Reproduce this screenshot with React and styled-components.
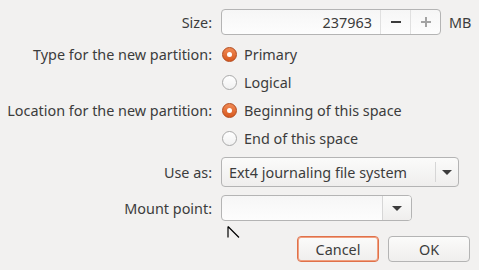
import React from "react";
import styled, { createGlobalStyle } from "styled-components";

const Global = createGlobalStyle`
  html, body {
    margin: 0;
    padding: 0;
    background: #f2f1f0;
  }
  body {
    font-family: "Noto Sans", "DejaVu Sans", sans-serif;
    font-size: 14.4px;
    color: #3c3c3c;
  }
`;

const Dialog = styled.div`
  width: 479px;
  height: 270px;
  padding-top: 9px;
  box-sizing: border-box;
  position: relative;
  overflow: hidden;
`;

const Row = styled.div`
  display: flex;
  align-items: center;
  height: ${(p) => p.$h}px;
  margin-top: ${(p) => p.$top || 0}px;
`;

const Label = styled.div`
  width: 221px;
  flex: none;
  text-align: right;
  padding-right: 9px;
  box-sizing: border-box;
  white-space: nowrap;
`;

const Field = styled.div`
  display: flex;
  align-items: center;
  height: ${(p) => p.$h}px;
  width: ${(p) => p.$w}px;
  box-sizing: border-box;
  border: 1px solid #b4b4b4;
  border-radius: 4px;
  background: linear-gradient(#f6f6f6, #fdfdfd);
  overflow: hidden;
`;

const EntryText = styled.div`
  flex: 1;
  text-align: right;
  padding-right: 8px;
`;

// spin glyphs are drawn as bars: the minus and plus in the theme are heavy
const SpinButton = styled.div`
  width: 29px;
  height: 100%;
  position: relative;
  border-left: 1px solid #e0e0e0;
  &::before,
  &::after {
    content: "";
    position: absolute;
    left: 50%;
    top: 50%;
    background: ${(p) => (p.$disabled ? "#a3a3a3" : "#3c3c3c")};
    transform: translate(-50%, -50%);
  }
  &::before {
    width: 10px;
    height: 2px;
  }
  &::after {
    display: ${(p) => (p.$plus ? "block" : "none")};
    width: 2px;
    height: 10px;
  }
`;

const Unit = styled.span`
  margin-left: 8px;
`;

const RadioRow = styled.label`
  display: flex;
  align-items: center;
  gap: 7px;
  padding-left: 1px;
`;

const RadioDot = styled.span`
  width: 15px;
  height: 15px;
  border-radius: 50%;
  box-sizing: border-box;
  display: flex;
  align-items: center;
  justify-content: center;
  border: 1px solid ${(p) => (p.$checked ? "#b24a1c" : "#a9a9a9")};
  background: ${(p) =>
    p.$checked
      ? "linear-gradient(#f08a55, #d8591f)"
      : "linear-gradient(#ffffff, #f1f1f1)"};
  &::after {
    content: "";
    display: ${(p) => (p.$checked ? "block" : "none")};
    width: 5px;
    height: 5px;
    border-radius: 50%;
    background: #ffffff;
  }
`;

const Combo = styled.div`
  display: flex;
  align-items: stretch;
  height: ${(p) => p.$h}px;
  width: ${(p) => p.$w}px;
  box-sizing: border-box;
  border: 1px solid #b4b4b4;
  border-radius: 4px;
  background: ${(p) =>
    p.$entry ? "linear-gradient(#f6f6f6, #fdfdfd)" : "linear-gradient(#fbfbfa, #efeeed)"};
  overflow: hidden;
`;

const ComboText = styled.div`
  flex: 1;
  display: flex;
  align-items: center;
  padding-left: 7px;
`;

const ComboArrow = styled.div`
  width: ${(p) => p.$w}px;
  display: flex;
  align-items: center;
  justify-content: center;
  background: ${(p) => (p.$entry ? "linear-gradient(#fbfbfa, #efeeed)" : "transparent")};
  border-left: 1px solid #d6d6d6;
  margin: ${(p) => (p.$entry ? "0" : "4px 0")};
  &::after {
    content: "";
    border-left: 5px solid transparent;
    border-right: 5px solid transparent;
    border-top: 5px solid #3c3c3c;
  }
`;

const Buttons = styled.div`
  display: flex;
  justify-content: flex-end;
  gap: 9px;
  padding-right: 9px;
  margin-top: 15px;
`;

const Button = styled.button`
  width: 82px;
  height: 26px;
  box-sizing: border-box;
  font: inherit;
  color: #3c3c3c;
  border-radius: 4px;
  border: 1px solid ${(p) => (p.$focused ? "#e0714a" : "#b4b4b4")};
  box-shadow: ${(p) => (p.$focused ? "inset 0 0 0 1px #f0a080" : "none")};
  background: linear-gradient(#fbfbfa, #efeeed);
  padding: 0;
`;

const Pointer = styled.svg`
  position: absolute;
  left: 227px;
  top: 226px;
`;

const Radio = ({ checked, children }) => (
  <RadioRow>
    <RadioDot $checked={checked} />
    {children}
  </RadioRow>
);

export default function App() {
  return (
    <Dialog>
      <Global />
      <Row $h={26}>
        <Label>Size:</Label>
        <Field $h={26} $w={220}>
          <EntryText>237963</EntryText>
          <SpinButton />
          <SpinButton $plus $disabled />
        </Field>
        <Unit>MB</Unit>
      </Row>
      <Row $h={28} $top={5}>
        <Label>Type for the new partition:</Label>
        <Radio checked>Primary</Radio>
      </Row>
      <Row $h={28}>
        <Label />
        <Radio>Logical</Radio>
      </Row>
      <Row $h={28}>
        <Label>Location for the new partition:</Label>
        <Radio checked>Beginning of this space</Radio>
      </Row>
      <Row $h={28}>
        <Label />
        <Radio>End of this space</Radio>
      </Row>
      <Row $h={30} $top={5}>
        <Label>Use as:</Label>
        <Combo $h={30} $w={238}>
          <ComboText>Ext4 journaling file system</ComboText>
          <ComboArrow $w={22} />
        </Combo>
      </Row>
      <Row $h={26} $top={8}>
        <Label>Mount point:</Label>
        <Combo $h={26} $w={191} $entry>
          <ComboText />
          <ComboArrow $w={28} $entry />
        </Combo>
      </Row>
      <Buttons>
        <Button $focused>Cancel</Button>
        <Button>OK</Button>
      </Buttons>
      <Pointer width="13" height="12" viewBox="0 0 13 12">
        <path d="M1 0.5 L1 11.5 M1 0.5 L12 11.5" stroke="#000" strokeWidth="1.2" fill="none" />
      </Pointer>
    </Dialog>
  );
}
